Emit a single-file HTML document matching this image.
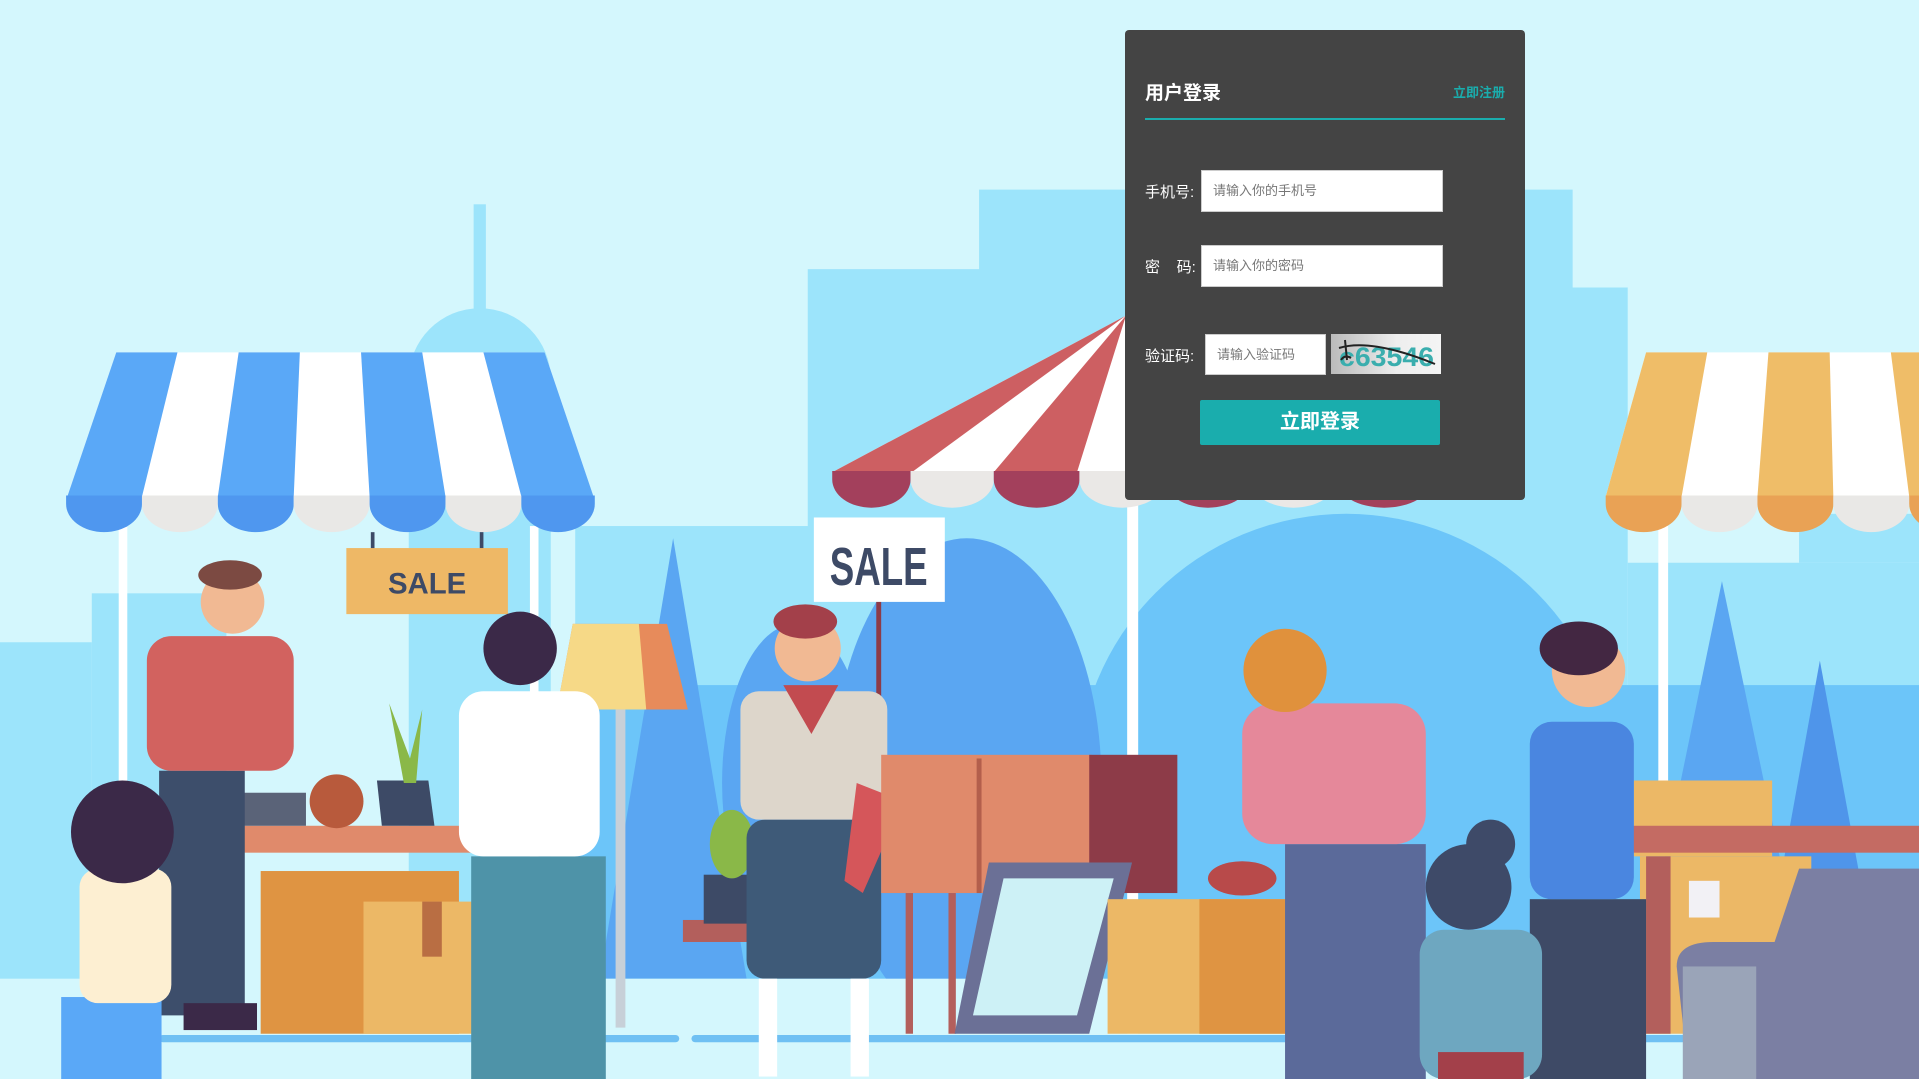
<!DOCTYPE html>
<html><head><meta charset="utf-8">
<style>
html,body{margin:0;padding:0;width:1919px;height:1079px;overflow:hidden;background:#d4f7fd;font-family:"Liberation Sans","Noto Sans CJK SC",sans-serif;}
#bg{position:absolute;left:0;top:0;width:1919px;height:1079px;}
#panel{position:absolute;left:1125px;top:30px;width:400px;height:470px;background:#444;border-radius:4px;}
.title{position:absolute;left:20px;top:48px;color:#fff;font-size:19px;font-weight:bold;}
.reg{position:absolute;right:20px;top:52px;color:#1aadad;font-size:13px;font-weight:bold;}
.line{position:absolute;left:20px;top:88px;width:360px;height:2px;background:#1aadad;}
.lab{position:absolute;left:20px;color:#fff;font-size:15px;}
.inp{position:absolute;background:#fff;border:1px solid #ccc;box-sizing:border-box;color:#777;font-size:13px;padding-left:11px;}
.btn{position:absolute;left:75px;top:370px;width:240px;height:45px;background:#1aadad;border-radius:2px;color:#fff;font-size:20px;font-weight:bold;text-align:center;line-height:45px;}
</style></head><body>
<svg id="bg" viewBox="0 0 1568 882" preserveAspectRatio="none" xmlns="http://www.w3.org/2000/svg">
<rect width="1568" height="882" fill="#d4f7fd"/>
<rect x="387" y="167" width="10" height="100" fill="#9ce4fb"/>
<circle cx="392" cy="310" r="58" fill="#9ce4fb"/>
<rect x="334" y="310" width="116" height="490" fill="#9ce4fb"/>
<rect x="660" y="220" width="150" height="600" fill="#9ce4fb"/>
<rect x="800" y="155" width="485" height="660" fill="#9ce4fb"/>
<rect x="1280" y="235" width="50" height="580" fill="#9ce4fb"/>
<rect x="1470" y="420" width="98" height="40" fill="#9ce4fb"/>
<rect x="0" y="525" width="75" height="300" fill="#9ce4fb"/>
<rect x="75" y="485" width="110" height="340" fill="#9ce4fb"/>
<rect x="470" y="430" width="200" height="400" fill="#9ce4fb"/>
<rect x="1330" y="460" width="238" height="370" fill="#9ce4fb"/>
<circle cx="1100" cy="640" r="220" fill="#6cc5f9"/>
<rect x="470" y="560" width="1098" height="270" fill="#6cc5f9"/>
<ellipse cx="790" cy="640" rx="110" ry="200" fill="#5aa6f2"/>
<polygon points="550,440 490,800 610,800" fill="#5aa6f2"/>
<polygon points="1407,475 1340,800 1475,800" fill="#5aa6f2"/>
<polygon points="1487,540 1440,800 1535,800" fill="#4f95ea"/>
<ellipse cx="650" cy="640" rx="60" ry="130" fill="#5aa6f2"/>
<rect x="0" y="800" width="1568" height="82" fill="#d4f7fd"/>
<rect x="130" y="846" width="425" height="6" rx="3" fill="#6fc0f3"/>
<rect x="565" y="846" width="550" height="6" rx="3" fill="#6fc0f3"/>
<rect x="1235" y="846" width="333" height="6" rx="3" fill="#6fc0f3"/>
<!-- left awning -->
<rect x="97" y="430" width="7" height="415" fill="#fff"/>
<rect x="433" y="430" width="7" height="280" fill="#fff"/>
<polygon points="95,288 445,288 485,406 55,406" fill="#fff"/>
<polygon points="95,288 145,288 116,406 55,406" fill="#5aa8f7"/>
<polygon points="195,288 245,288 240,406 178,406" fill="#5aa8f7"/>
<polygon points="295,288 345,288 364,406 302,406" fill="#5aa8f7"/>
<polygon points="395,288 445,288 485,406 426,406" fill="#5aa8f7"/>
<g>
<path d="M54 405 L54 412 A31 23 0 0 0 116 412 L116 405Z" fill="#4f97ef"/>
<path d="M116 405 L116 412 A31 23 0 0 0 178 412 L178 405Z" fill="#e9e8e6"/>
<path d="M178 405 L178 412 A31 23 0 0 0 240 412 L240 405Z" fill="#4f97ef"/>
<path d="M240 405 L240 412 A31 23 0 0 0 302 412 L302 405Z" fill="#e9e8e6"/>
<path d="M302 405 L302 412 A31 23 0 0 0 364 412 L364 405Z" fill="#4f97ef"/>
<path d="M364 405 L364 412 A31 23 0 0 0 426 412 L426 405Z" fill="#e9e8e6"/>
<path d="M426 405 L426 412 A30 23 0 0 0 486 412 L486 405Z" fill="#4f97ef"/>
</g>
<rect x="303" y="435" width="3" height="15" fill="#3d4a66"/><rect x="392" y="435" width="3" height="15" fill="#3d4a66"/>
<rect x="283" y="448" width="132" height="54" fill="#eeb866"/>
<text x="349" y="485" font-family="Liberation Sans" font-weight="bold" font-size="24" fill="#3d4a66" text-anchor="middle">SALE</text>
<!-- umbrella -->
<rect x="921" y="400" width="9" height="445" fill="#fff"/>
<polygon points="920,258 1170,386 680,386" fill="#fff"/>
<polygon points="920,258 745,386 680,386" fill="#cd5f62"/>
<polygon points="920,258 880,386 812,386" fill="#cd5f62"/>
<polygon points="920,258 1010,386 950,386" fill="#cd5f62"/>
<polygon points="920,258 1170,386 1090,386" fill="#cd5f62"/>
<g>
<path d="M680 385 L680 392 A32 23 0 0 0 744 392 L744 385Z" fill="#a3405c"/>
<path d="M744 385 L744 392 A34 23 0 0 0 812 392 L812 385Z" fill="#eae8e6"/>
<path d="M812 385 L812 392 A35 23 0 0 0 882 392 L882 385Z" fill="#a3405c"/>
<path d="M882 385 L882 392 A35 23 0 0 0 952 392 L952 385Z" fill="#eae8e6"/>
<path d="M952 385 L952 392 A35 23 0 0 0 1022 392 L1022 385Z" fill="#a3405c"/>
<path d="M1022 385 L1022 392 A35 23 0 0 0 1092 392 L1092 385Z" fill="#eae8e6"/>
<path d="M1092 385 L1092 392 A39 23 0 0 0 1170 392 L1170 385Z" fill="#a3405c"/>
</g>
<rect x="716" y="490" width="4" height="150" fill="#8d3b48"/>
<rect x="665" y="423" width="107" height="69" fill="#fff"/>
<text x="718" y="478" font-family="Liberation Sans" font-weight="bold" font-size="44" fill="#3d4a66" text-anchor="middle" textLength="80" lengthAdjust="spacingAndGlyphs">SALE</text>
<!-- right awning -->
<rect x="1355" y="430" width="8" height="250" fill="#fff"/>
<polygon points="1345,288 1568,288 1568,406 1312,406" fill="#fff"/>
<polygon points="1345,288 1395,288 1374,406 1312,406" fill="#efbd68"/>
<polygon points="1445,288 1495,288 1498,406 1436,406" fill="#efbd68"/>
<polygon points="1545,288 1568,288 1568,406 1560,406" fill="#efbd68"/>
<g>
<path d="M1312 405 L1312 412 A31 23 0 0 0 1374 412 L1374 405Z" fill="#e9a255"/>
<path d="M1374 405 L1374 412 A31 23 0 0 0 1436 412 L1436 405Z" fill="#e9e8e6"/>
<path d="M1436 405 L1436 412 A31 23 0 0 0 1498 412 L1498 405Z" fill="#e9a255"/>
<path d="M1498 405 L1498 412 A31 23 0 0 0 1560 412 L1560 405Z" fill="#e9e8e6"/>
<path d="M1560 405 L1560 412 A31 23 0 0 0 1622 412 L1622 405Z" fill="#e9a255"/>
</g>
<!-- left stall -->
<rect x="130" y="675" width="270" height="22" fill="#e08a6b"/>
<rect x="213" y="712" width="162" height="133" fill="#df9442"/>
<rect x="297" y="737" width="158" height="108" fill="#ecb866"/>
<rect x="345" y="737" width="16" height="45" fill="#b96e43"/>
<rect x="150" y="648" width="100" height="27" fill="#5a6378"/>
<circle cx="275" cy="655" r="22" fill="#b85a3c"/>
<polygon points="308,638 350,638 355,675 312,675" fill="#3d4a66"/>
<polygon points="330,640 318,575 335,620 345,580 340,640" fill="#8ab848"/>
<rect x="130" y="630" width="70" height="200" fill="#3d4e6b"/>
<rect x="120" y="520" width="120" height="110" rx="20" fill="#d2625f"/>
<circle cx="190" cy="492" r="26" fill="#f1b993"/>
<ellipse cx="188" cy="470" rx="26" ry="12" fill="#7c4a42"/>
<rect x="150" y="820" width="60" height="22" fill="#3b2948"/>
<rect x="50" y="815" width="82" height="67" fill="#5aa8f7"/>
<rect x="65" y="710" width="75" height="110" rx="15" fill="#fdefd2"/>
<circle cx="100" cy="680" r="42" fill="#3b2948"/>
<rect x="503" y="580" width="8" height="260" fill="#c7d0d8"/>
<polygon points="468,510 545,510 562,580 455,580" fill="#e78b5b"/>
<polygon points="468,510 522,510 528,580 455,580" fill="#f6d987"/>
<rect x="385" y="700" width="110" height="182" fill="#4e93a8"/>
<rect x="375" y="565" width="115" height="135" rx="20" fill="#fff"/>
<circle cx="425" cy="530" r="30" fill="#3b2948"/>
<rect x="558" y="752" width="100" height="18" fill="#b35f5c"/>
<rect x="575" y="715" width="45" height="40" fill="#3d4a66"/>
<ellipse cx="598" cy="690" rx="18" ry="28" fill="#8ab848"/>
<rect x="610" y="670" width="110" height="130" rx="15" fill="#3e5a78"/>
<rect x="605" y="565" width="120" height="105" rx="15" fill="#ddd6cb"/>
<polygon points="640,560 685,560 663,600" fill="#c24b50"/>
<circle cx="660" cy="530" r="27" fill="#f1b993"/>
<ellipse cx="658" cy="508" rx="26" ry="14" fill="#a3404a"/>
<rect x="620" y="800" width="15" height="80" fill="#fff"/><rect x="695" y="800" width="15" height="80" fill="#fff"/>
<polygon points="700,640 738,655 705,730 690,720" fill="#d5565a"/>
<rect x="720" y="617" width="172" height="113" fill="#e08a6b"/>
<rect x="890" y="617" width="72" height="113" fill="#8d3b48"/>
<rect x="798" y="620" width="4" height="110" fill="#b35f4c"/>
<rect x="740" y="730" width="6" height="115" fill="#b35f5c"/><rect x="775" y="730" width="6" height="115" fill="#b35f5c"/>
<polygon points="808,705 925,705 890,845 780,845" fill="#6b7096"/>
<polygon points="820,718 910,718 880,830 795,830" fill="#cdf1f6"/>
<rect x="905" y="735" width="150" height="110" fill="#ecb866"/>
<rect x="980" y="735" width="75" height="110" fill="#df9442"/>
<ellipse cx="1015" cy="718" rx="28" ry="14" fill="#b84a4a"/>
<rect x="1050" y="690" width="115" height="192" fill="#5b6a9a"/>
<rect x="1015" y="575" width="150" height="115" rx="25" fill="#e5889a"/>
<circle cx="1050" cy="548" r="34" fill="#e0913c"/>
<rect x="1335" y="638" width="113" height="62" fill="#ecb866"/>
<rect x="1330" y="675" width="238" height="22" fill="#c46b63"/>
<rect x="1340" y="700" width="140" height="145" fill="#ecb866"/>
<rect x="1345" y="700" width="20" height="145" fill="#b35f5c"/>
<rect x="1380" y="720" width="25" height="30" fill="#f2f1f5"/>
<path d="M1370 790 Q1370 770 1400 770 L1450 770 L1470 710 L1568 710 L1568 882 L1380 882 Z" fill="#7b7fa3"/>
<rect x="1375" y="790" width="60" height="92" fill="#9aa4b8"/>
<rect x="1250" y="735" width="95" height="147" fill="#3e4a66"/>
<rect x="1250" y="590" width="85" height="145" rx="18" fill="#4a86e0"/>
<circle cx="1298" cy="548" r="30" fill="#f1b993"/>
<ellipse cx="1290" cy="530" rx="32" ry="22" fill="#432742"/>
<rect x="1160" y="760" width="100" height="122" rx="20" fill="#6ea7c0"/>
<rect x="1175" y="860" width="70" height="22" fill="#a3404a"/>
<circle cx="1200" cy="725" r="35" fill="#3e4a68"/>
<circle cx="1218" cy="690" r="20" fill="#3e4a68"/>
</svg>
<div id="panel">
<div class="title">用户登录</div>
<div class="reg">立即注册</div>
<div class="line"></div>
<div class="lab" style="top:151px">手机号:</div>
<div class="inp" style="left:76px;top:140px;width:242px;height:42px;line-height:40px">请输入你的手机号</div>
<div class="lab" style="top:226px">密&nbsp;&nbsp;&nbsp;&nbsp;码:</div>
<div class="inp" style="left:76px;top:215px;width:242px;height:42px;line-height:40px">请输入你的密码</div>
<div class="lab" style="top:315px">验证码:</div>
<div class="inp" style="left:80px;top:304px;width:121px;height:41px;line-height:39px">请输入验证码</div>
<div style="position:absolute;left:206px;top:304px;width:110px;height:40px;background:linear-gradient(90deg,#bbb,#eee 60%,#f4f4f4);overflow:hidden">
<svg width="110" height="40"><text x="8" y="32" font-family="Liberation Sans" font-weight="bold" font-size="27" fill="#3aaeae" textLength="95" lengthAdjust="spacingAndGlyphs">c63546</text><path d="M8 14 Q40 4 104 30" stroke="#222" stroke-width="2" fill="none"/><path d="M14 6 L16 26 M10 26 Q14 20 20 24" stroke="#222" stroke-width="2" fill="none"/></svg>
</div>
<div class="btn">立即登录</div>
</div>
</body></html>
